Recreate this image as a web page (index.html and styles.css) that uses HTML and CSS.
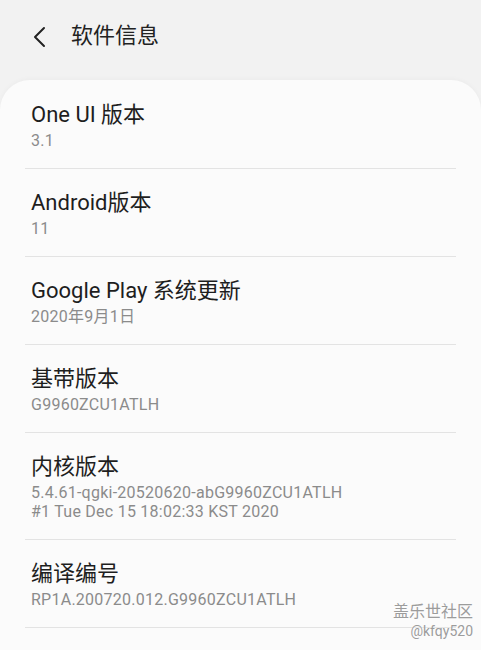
FILE: index.html
```html
<!DOCTYPE html>
<html lang="zh-CN">
<head>
    <meta charset="UTF-8">
    <meta name="viewport" content="width=device-width, initial-scale=1.0">
    <title>软件信息</title>
    <link rel="stylesheet" href="styles.css">
</head>
<body>
    <div class="page">
        <!-- 顶部标题栏 -->
        <div class="header">
            <svg class="back" width="14" height="22" viewBox="0 0 14 22">
                <polyline points="12,2 3,11 12,20" fill="none" stroke="#222" stroke-width="2" stroke-linecap="round" stroke-linejoin="round"/>
            </svg>
            <span class="header-title">软件信息</span>
        </div>

        <div class="card">
            <div class="row">
                <div class="title">One UI 版本</div>
                <div class="sub">3.1</div>
            </div>
            <div class="row">
                <div class="title">Android版本</div>
                <div class="sub">11</div>
            </div>
            <div class="row">
                <div class="title">Google Play 系统更新</div>
                <div class="sub">2020年9月1日</div>
            </div>
            <div class="row">
                <div class="title">基带版本</div>
                <div class="sub">G9960ZCU1ATLH</div>
            </div>
            <div class="row">
                <div class="title">内核版本</div>
                <div class="sub">5.4.61-qgki-20520620-abG9960ZCU1ATLH</div>
                <div class="sub">#1 Tue Dec 15 18:02:33 KST 2020</div>
            </div>
            <div class="row">
                <div class="title">编译编号</div>
                <div class="sub">RP1A.200720.012.G9960ZCU1ATLH</div>
            </div>
            <div class="row">
                <div class="title">SE for Android 状态</div>
                <div class="sub">强制执行</div>
            </div>
        </div>

        <!-- 水印 -->
        <div class="watermark">
            <div class="wm-name">盖乐世社区</div>
            <div class="wm-user">@kfqy520</div>
        </div>
    </div>
</body>
</html>
```

FILE: styles.css
```css
body {
    margin: 0;
    background-color: #f2f2f2;
    font-family: Roboto, "Noto Sans CJK SC", sans-serif;
    color: #1e1e1e;
}
.page { position: relative; height: 650px; overflow: hidden; }

.header { display: flex; align-items: center; height: 72px; padding-left: 32px; }
.back { display: block; margin-top: 1px; }
.header-title { margin-left: 25px; font-size: 22px; line-height: 28px; color: #222; }

.card {
    margin-top: 8px;
    background: #fbfbfb;
    border-radius: 30px 30px 0 0;
    box-shadow: 0 -1px 5px rgba(0, 0, 0, 0.03);
    padding: 0 25px;
    min-height: 600px;
}
.row { padding: 20px 6px 18px; border-bottom: 1px solid #e3e3e3; }
.row:first-child { padding-top: 21px; }
.title { font-size: 22px; line-height: 28px; }
.sub { font-size: 16px; line-height: 19px; letter-spacing: 0.25px; color: #8b8b8b; }
.title + .sub { margin-top: 2px; }

.watermark {
    position: absolute;
    right: 8px;
    top: 601px;
    text-align: right;
    color: #9c9c9c;
    text-shadow: 0 0 2px #fff;
}
.wm-name { font-size: 16px; line-height: 21px; }
.wm-user { font-size: 14px; line-height: 18px; }
```
